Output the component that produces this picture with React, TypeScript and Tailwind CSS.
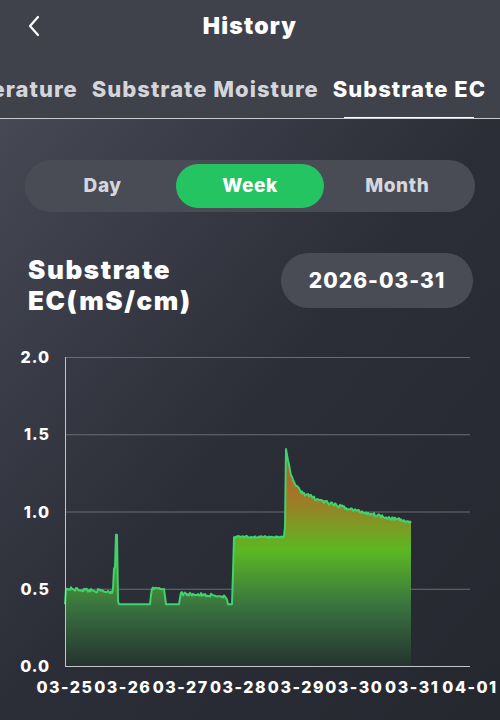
import React from "react";

const font = { fontFamily: "Inter, 'Open Sans', sans-serif" };

// chart frame (svg local coords, svg top sits at page y=340)
const X0 = 65;
const X1 = 470;
const Y0 = 326; // value 0.0
const K = 154.5; // px per 1.0
const yOf = (v: number) => Y0 - v * K;

function rand(seed: number) {
  let s = seed;
  return () => {
    s = (s * 16807) % 2147483647;
    return s / 2147483647 - 0.5;
  };
}

function buildData() {
  const r = rand(42);
  const pts: [number, number][] = [];
  const lerp = (a: number, b: number, t: number) => a + (b - a) * t;
  for (let x = 65; x <= 411; x += 1) {
    let v = 0.4;
    const n = r() * 0.022;
    if (x < 66) v = 0.4;
    else if (x < 68) v = 0.5;
    else if (x < 113) v = lerp(0.5, 0.48, (x - 68) / 45) + n;
    else if (x === 113) v = 0.5;
    else if (x === 114) v = 0.63;
    else if (x === 115) v = 0.64;
    else if (x <= 117) v = 0.85;
    else if (x === 118) v = 0.42;
    else if (x < 151) v = 0.4;
    else if (x === 151) v = 0.46;
    else if (x < 165) v = 0.5 + n * 0.8;
    else if (x === 165) v = 0.45;
    else if (x < 180) v = 0.4;
    else if (x === 180) v = 0.44;
    else if (x < 227) v = lerp(0.47, 0.45, (x - 181) / 46) + n;
    else if (x === 227) v = 0.43;
    else if (x < 233) v = 0.4;
    else if (x === 233) v = 0.6;
    else if (x < 285) v = 0.835 + n * 0.6;
    else if (x === 285) v = 0.9;
    else {
      let base;
      if (x < 330) base = lerp(1.12, 1.05, (x - 300) / 30);
      else if (x < 360) base = lerp(1.05, 1.0, (x - 330) / 30);
      else base = lerp(1.0, 0.93, (x - 360) / 51);
      v = base + 0.24 * Math.exp(-(x - 286) / 5) + (x < 300 ? 0.0015 * (300 - x) : 0) + n;
    }
    pts.push([x, v]);
  }
  return pts;
}

const data = buildData();

const Chart: React.FC = () => {
  const line = data.map(([x, v], i) => `${i ? "L" : "M"}${x} ${yOf(v).toFixed(1)}`).join(" ");
  const last = data[data.length - 1][0];
  const area = `${line} L${last} ${Y0} L${X0} ${Y0} Z`;
  const ticks = [2.0, 1.5, 1.0, 0.5, 0.0];
  const days = ["03-25", "03-26", "03-27", "03-28", "03-29", "03-30", "03-31", "04-01"];
  const step = (X1 - X0) / 7;
  return (
    <svg width={500} height={380} className="block" style={font}>
      <defs>
        <linearGradient id="ecFill" gradientUnits="userSpaceOnUse" x1="0" y1={yOf(2)} x2="0" y2={Y0}>
          <stop offset="0" stopColor="#d8402c" />
          <stop offset="0.3" stopColor="#c6532c" />
          <stop offset="0.46" stopColor="#a07a26" />
          <stop offset="0.625" stopColor="#5cb822" />
          <stop offset="0.8" stopColor="#3a7540" />
          <stop offset="1" stopColor="#25332f" />
        </linearGradient>
      </defs>
      {ticks.slice(0, 4).map((t) => (
        <line key={t} x1={X0} x2={X1} y1={yOf(t) + 0.5} y2={yOf(t) + 0.5} stroke="#6a6c74" strokeWidth={1} />
      ))}
      <path d={area} fill="url(#ecFill)" />
      <path d={line} fill="none" stroke="#3fd36e" strokeWidth={2} strokeLinejoin="round" />
      <line x1={X0 + 0.5} x2={X0 + 0.5} y1={yOf(2)} y2={Y0} stroke="#c4c5cb" strokeWidth={1} />
      <line x1={X0} x2={X1} y1={Y0 + 0.5} y2={Y0 + 0.5} stroke="#c4c5cb" strokeWidth={1} />
      {ticks.map((t) => (
        <text key={t} x={50} y={yOf(t) + 6} textAnchor="end" fill="#ffffff" fontSize={16} fontWeight={800} letterSpacing={1}>
          {t.toFixed(1)}
        </text>
      ))}
      {days.map((d, i) => (
        <text key={d} x={X0 + step * i} y={353} textAnchor="middle" fill="#ffffff" fontSize={16} fontWeight={800} letterSpacing={1.5}>
          {d}
        </text>
      ))}
    </svg>
  );
};

const App: React.FC = () => {
  return (
    <div className="w-[500px] h-[720px] overflow-hidden bg-[#262930] text-white" style={font}>
      <div className="bg-[#3f414b]">
        <div className="relative h-[52px] flex items-center justify-center">
          <svg className="absolute left-[26px] top-[15px]" width={16} height={22} viewBox="0 0 16 22">
            <path d="M12 2 L4 11 L12 20" fill="none" stroke="#ffffff" strokeWidth={2.2} strokeLinecap="round" strokeLinejoin="round" />
          </svg>
          <span className="text-[23px] font-black tracking-[1.2px]">History</span>
        </div>
        <div className="h-[67px] flex justify-end items-end gap-[14px] pr-[14px] overflow-hidden border-b border-[#c8c9cf] whitespace-nowrap">
          <div className="shrink-0 pb-[12px] text-[22px] font-extrabold tracking-[1px] text-[#d4d5da]">Substrate Temperature</div>
          <div className="shrink-0 pb-[12px] text-[22px] font-extrabold tracking-[1px] text-[#d4d5da]">Substrate Moisture</div>
          <div className="relative shrink-0 pb-[12px] text-[22px] font-extrabold tracking-[1px] text-white">
            Substrate EC
            <div className="absolute bottom-[-2px] left-[11px] right-[12px] h-[3px] bg-white" />
          </div>
        </div>
      </div>
      <div className="bg-gradient-to-br from-[#464854] via-[#2b2e37] to-[#25282f]">
        <div className="px-[25px] pt-[41px]">
          <div className="h-[52px] rounded-full bg-[#4a4c55] p-[4px] grid grid-cols-3 text-[19px] font-extrabold tracking-[0.6px]">
            <div className="flex items-center justify-center text-[#d6d7dc]">Day</div>
            <div className="flex items-center justify-center rounded-full bg-[#25c463] text-white">Week</div>
            <div className="flex items-center justify-center text-[#d6d7dc]">Month</div>
          </div>
        </div>
        <div className="flex justify-between items-start pl-[28px] pr-[27px] pt-[41px]">
          <div className="text-[26px] leading-[31px] font-black tracking-[1.6px] pt-[1px]">
            Substrate
            <br />
            EC(mS/cm)
          </div>
          <div className="w-[192px] h-[55px] rounded-full bg-[#4a4c55] flex items-center justify-center text-[21px] font-extrabold tracking-[1px]">
            2026-03-31
          </div>
        </div>
        <div className="pt-[24px]">
          <Chart />
        </div>
      </div>
    </div>
  );
};

export default App;
